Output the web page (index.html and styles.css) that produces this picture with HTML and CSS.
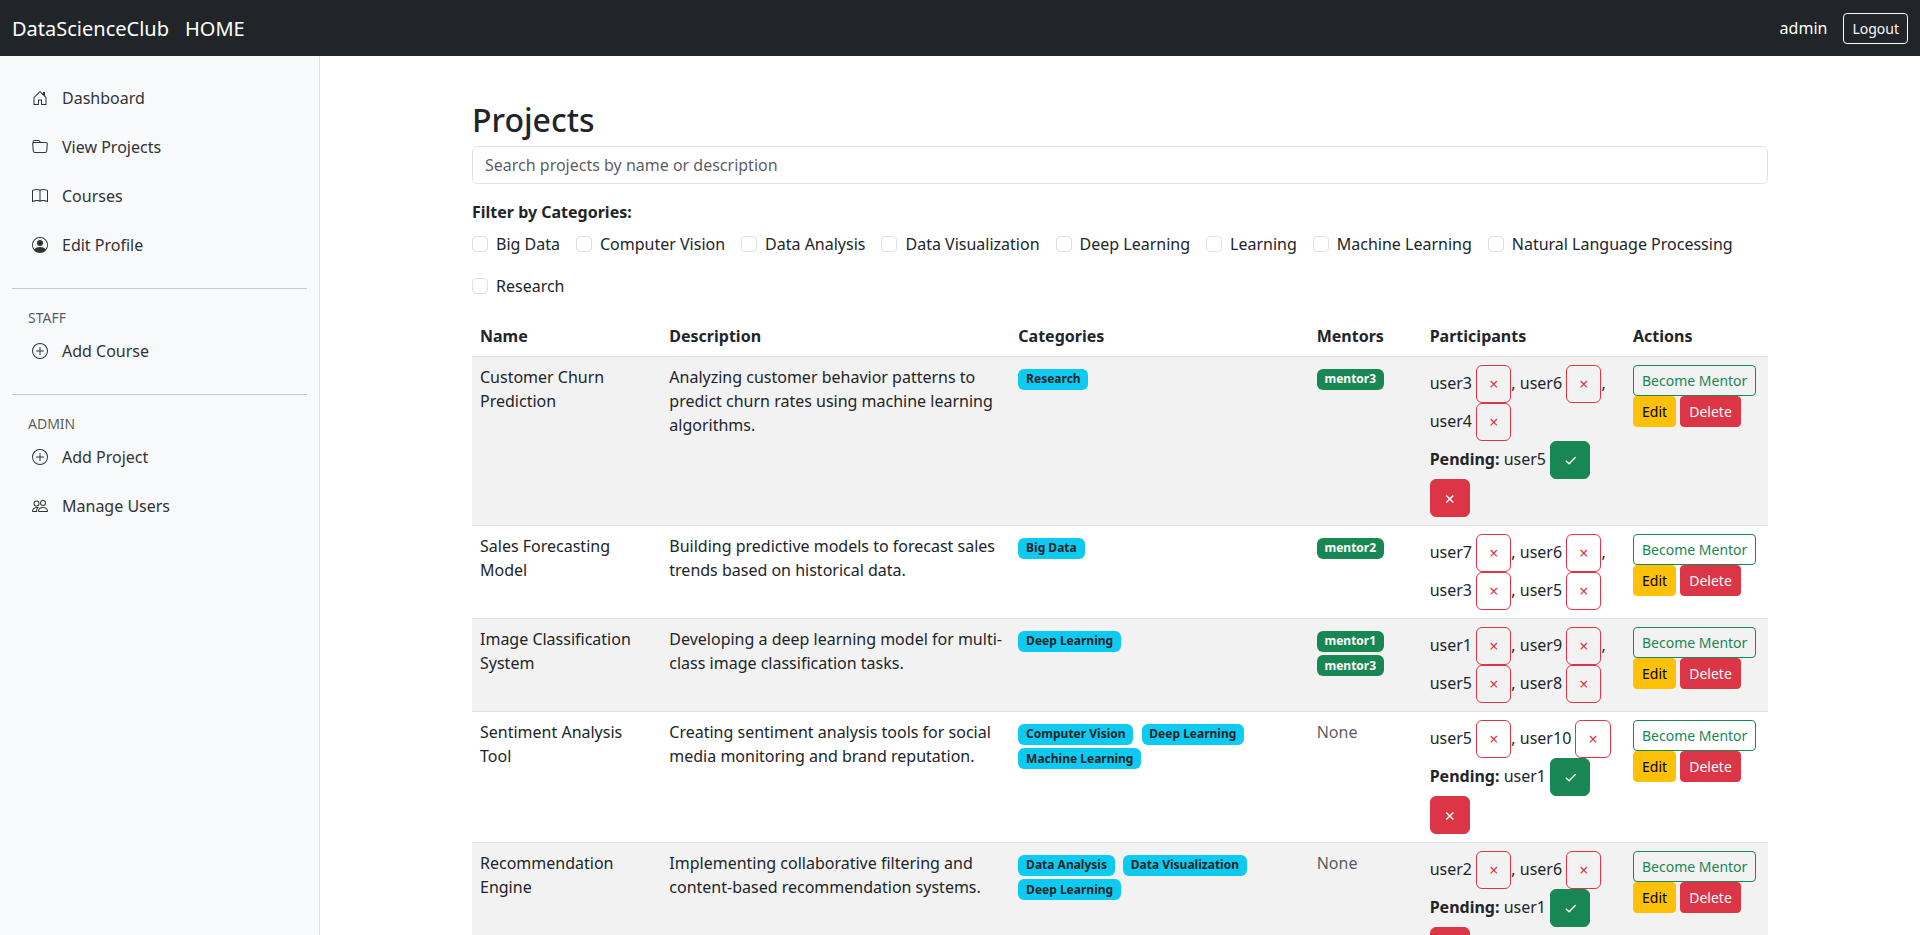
FILE: index.html
```html
<!DOCTYPE html>
<html lang="en">
<head>
<meta charset="utf-8">
<title>Projects</title>
<link rel="stylesheet" href="styles.css">
</head>
<body>
<svg class="defs" width="0" height="0">
  <symbol id="i-check" viewBox="0 0 14 24"><path d="M2.8 12.8 6.1 15.8 12.6 9.3" fill="none" stroke="currentColor" stroke-width="1.4"/></symbol>
  <symbol id="i-x" viewBox="0 0 14 24"><path d="M3.3 9.5l7 7M10.3 9.5l-7 7" fill="none" stroke="currentColor" stroke-width="1.5"/></symbol>
</svg>
<nav class="navbar">
  <div class="brands"><a class="brand">DataScienceClub</a><a class="brand">HOME</a></div>
  <div class="account"><span class="account-name">admin</span><button class="btn btn-sm outline-light">Logout</button></div>
</nav>
<div class="layout">
  <aside class="sidebar">
    <a class="side-link"><svg class="icon" viewBox="0 0 16 16"><path d="M8.354 1.146a.5.5 0 0 0-.708 0l-6 6A.5.5 0 0 0 1.5 7.5v7a.5.5 0 0 0 .5.5h4.5a.5.5 0 0 0 .5-.5v-4h2v4a.5.5 0 0 0 .5.5H14a.5.5 0 0 0 .5-.5v-7a.5.5 0 0 0-.146-.354L13 5.793V2.5a.5.5 0 0 0-.5-.5h-1a.5.5 0 0 0-.5.5v1.293zM2.5 14V7.707l5.5-5.5 5.5 5.5V14H10v-4a.5.5 0 0 0-.5-.5h-3a.5.5 0 0 0-.5.5v4z"/></svg>Dashboard</a>
    <a class="side-link"><svg class="icon" viewBox="0 0 16 16"><path d="M.54 3.87.5 3a2 2 0 0 1 2-2h3.672a2 2 0 0 1 1.414.586l.828.828A2 2 0 0 0 9.828 3h3.982a2 2 0 0 1 1.992 2.181l-.637 7A2 2 0 0 1 13.174 14H2.826a2 2 0 0 1-1.991-1.819l-.637-7a2 2 0 0 1 .342-1.31zM2.19 4a1 1 0 0 0-.996 1.09l.637 7a1 1 0 0 0 .995.91h10.348a1 1 0 0 0 .995-.91l.637-7A1 1 0 0 0 13.81 4zm4.69-1.707A1 1 0 0 0 6.172 2H2.5a1 1 0 0 0-1 .981l.006.139q.323-.119.684-.12h5.396z"/></svg>View Projects</a>
    <a class="side-link"><svg class="icon" viewBox="0 0 16 16"><path d="M1 2.828c.885-.37 2.154-.769 3.388-.893 1.33-.134 2.458.063 3.112.752v9.746c-.935-.53-2.12-.603-3.213-.493-1.18.12-2.37.461-3.287.811zm7.5-.141c.654-.689 1.782-.886 3.112-.752 1.234.124 2.503.523 3.388.893v9.923c-.918-.35-2.107-.692-3.287-.81-1.094-.111-2.278-.039-3.213.492zM8 1.783C7.015.936 5.587.81 4.287.94c-1.514.153-3.042.672-3.994 1.105A.5.5 0 0 0 0 2.5v11a.5.5 0 0 0 .707.455c.882-.4 2.303-.881 3.68-1.02 1.409-.142 2.59.087 3.223.877a.5.5 0 0 0 .78 0c.633-.79 1.814-1.019 3.222-.877 1.378.139 2.8.62 3.681 1.02A.5.5 0 0 0 16 13.5v-11a.5.5 0 0 0-.293-.455c-.952-.433-2.48-.952-3.994-1.105C10.413.809 8.985.936 8 1.783"/></svg>Courses</a>
    <a class="side-link"><svg class="icon" viewBox="0 0 16 16"><path d="M11 6a3 3 0 1 1-6 0 3 3 0 0 1 6 0"/><path fill-rule="evenodd" d="M0 8a8 8 0 1 1 16 0A8 8 0 0 1 0 8m8-7a7 7 0 0 0-5.468 11.37C3.242 11.226 4.805 10 8 10s4.757 1.225 5.468 2.37A7 7 0 0 0 8 1"/></svg>Edit Profile</a>
    <hr class="rule">
    <div class="side-label">STAFF</div>
    <a class="side-link"><svg class="icon" viewBox="0 0 16 16"><path d="M8 15A7 7 0 1 1 8 1a7 7 0 0 1 0 14m0 1A8 8 0 1 0 8 0a8 8 0 0 0 0 16"/><path d="M8 4a.5.5 0 0 1 .5.5v3h3a.5.5 0 0 1 0 1h-3v3a.5.5 0 0 1-1 0v-3h-3a.5.5 0 0 1 0-1h3v-3A.5.5 0 0 1 8 4"/></svg>Add Course</a>
    <hr class="rule">
    <div class="side-label">ADMIN</div>
    <a class="side-link"><svg class="icon" viewBox="0 0 16 16"><path d="M8 15A7 7 0 1 1 8 1a7 7 0 0 1 0 14m0 1A8 8 0 1 0 8 0a8 8 0 0 0 0 16"/><path d="M8 4a.5.5 0 0 1 .5.5v3h3a.5.5 0 0 1 0 1h-3v3a.5.5 0 0 1-1 0v-3h-3a.5.5 0 0 1 0-1h3v-3A.5.5 0 0 1 8 4"/></svg>Add Project</a>
    <a class="side-link"><svg class="icon" viewBox="0 0 16 16"><path d="M15 14s1 0 1-1-1-4-5-4-5 3-5 4 1 1 1 1zm-7.978-1L7 12.996c.001-.264.167-1.03.76-1.72C8.312 10.629 9.282 10 11 10c1.717 0 2.687.63 3.24 1.276.593.69.758 1.457.76 1.72l-.008.002-.014.002zM11 7a2 2 0 1 0 0-4 2 2 0 0 0 0 4m3-2a3 3 0 1 1-6 0 3 3 0 0 1 6 0M6.936 9.28a6 6 0 0 0-1.23-.247A7 7 0 0 0 5 9c-4 0-5 3-5 4q0 1 1 1h4.216A2.24 2.24 0 0 1 5 13c0-1.01.377-2.042 1.09-2.904.243-.294.526-.569.846-.816M4.92 10A5.5 5.5 0 0 0 4 13H1c0-.26.164-1.03.76-1.724.545-.636 1.492-1.256 3.16-1.275ZM1.5 5.5a3 3 0 1 1 6 0 3 3 0 0 1-6 0m3-2a2 2 0 1 0 0 4 2 2 0 0 0 0-4"/></svg>Manage Users</a>
  </aside>
  <main class="main">
    <div class="container">
      <h2 class="title">Projects</h2>
      <input class="search" type="text" placeholder="Search projects by name or description">
      <div class="filter-title">Filter by Categories:</div>
      <div class="filters">
        <label class="check"><input type="checkbox" class="box">Big Data</label>
        <label class="check"><input type="checkbox" class="box">Computer Vision</label>
        <label class="check"><input type="checkbox" class="box">Data Analysis</label>
        <label class="check"><input type="checkbox" class="box">Data Visualization</label>
        <label class="check"><input type="checkbox" class="box">Deep Learning</label>
        <label class="check"><input type="checkbox" class="box">Learning</label>
        <label class="check"><input type="checkbox" class="box">Machine Learning</label>
        <label class="check"><input type="checkbox" class="box">Natural Language Processing</label>
        <label class="check"><input type="checkbox" class="box">Research</label>
      </div>
      <table class="table">
        <colgroup><col class="c-name"><col class="c-desc"><col class="c-cat"><col class="c-ment"><col class="c-part"><col class="c-act"></colgroup>
        <thead><tr><th>Name</th><th>Description</th><th>Categories</th><th>Mentors</th><th>Participants</th><th>Actions</th></tr></thead>
        <tbody>
          <tr>
            <td>Customer Churn Prediction</td>
            <td>Analyzing customer behavior patterns to predict churn rates using machine learning algorithms.</td>
            <td><span class="badge info">Research</span></td>
            <td><span class="badge success">mentor3</span></td>
            <td>user3 <button class="btn outline-danger">×</button>, user6 <button class="btn outline-danger">×</button>, user4 <button class="btn outline-danger">×</button><br><b>Pending:</b> user5 <button class="btn btn-icon fill-success"><svg class="mark"><use href="#i-check"/></svg></button> <button class="btn btn-icon fill-danger"><svg class="mark"><use href="#i-x"/></svg></button></td>
            <td><button class="btn btn-sm outline-success">Become Mentor</button> <button class="btn btn-sm fill-warning">Edit</button> <button class="btn btn-sm fill-danger">Delete</button></td>
          </tr>
          <tr>
            <td>Sales Forecasting Model</td>
            <td>Building predictive models to forecast sales trends based on historical data.</td>
            <td><span class="badge info">Big Data</span></td>
            <td><span class="badge success">mentor2</span></td>
            <td>user7 <button class="btn outline-danger">×</button>, user6 <button class="btn outline-danger">×</button>, user3 <button class="btn outline-danger">×</button>, user5 <button class="btn outline-danger">×</button></td>
            <td><button class="btn btn-sm outline-success">Become Mentor</button> <button class="btn btn-sm fill-warning">Edit</button> <button class="btn btn-sm fill-danger">Delete</button></td>
          </tr>
          <tr>
            <td>Image Classification System</td>
            <td>Developing a deep learning model for multi-class image classification tasks.</td>
            <td><span class="badge info">Deep Learning</span></td>
            <td><span class="badge success">mentor1</span> <span class="badge success">mentor3</span></td>
            <td>user1 <button class="btn outline-danger">×</button>, user9 <button class="btn outline-danger">×</button>, user5 <button class="btn outline-danger">×</button>, user8 <button class="btn outline-danger">×</button></td>
            <td><button class="btn btn-sm outline-success">Become Mentor</button> <button class="btn btn-sm fill-warning">Edit</button> <button class="btn btn-sm fill-danger">Delete</button></td>
          </tr>
          <tr>
            <td>Sentiment Analysis Tool</td>
            <td>Creating sentiment analysis tools for social media monitoring and brand reputation.</td>
            <td><span class="badge info">Computer Vision</span> <span class="badge info">Deep Learning</span> <span class="badge info">Machine Learning</span></td>
            <td><span class="muted">None</span></td>
            <td>user5 <button class="btn outline-danger">×</button>, user10 <button class="btn outline-danger">×</button><br><b>Pending:</b> user1 <button class="btn btn-icon fill-success"><svg class="mark"><use href="#i-check"/></svg></button> <button class="btn btn-icon fill-danger"><svg class="mark"><use href="#i-x"/></svg></button></td>
            <td><button class="btn btn-sm outline-success">Become Mentor</button> <button class="btn btn-sm fill-warning">Edit</button> <button class="btn btn-sm fill-danger">Delete</button></td>
          </tr>
          <tr>
            <td>Recommendation Engine</td>
            <td>Implementing collaborative filtering and content-based recommendation systems.</td>
            <td><span class="badge info">Data Analysis</span> <span class="badge info">Data Visualization</span> <span class="badge info">Deep Learning</span></td>
            <td><span class="muted">None</span></td>
            <td>user2 <button class="btn outline-danger">×</button>, user6 <button class="btn outline-danger">×</button><br><b>Pending:</b> user1 <button class="btn btn-icon fill-success"><svg class="mark"><use href="#i-check"/></svg></button> <button class="btn btn-icon fill-danger"><svg class="mark"><use href="#i-x"/></svg></button></td>
            <td><button class="btn btn-sm outline-success">Become Mentor</button> <button class="btn btn-sm fill-warning">Edit</button> <button class="btn btn-sm fill-danger">Delete</button></td>
          </tr>
        </tbody>
      </table>
    </div>
  </main>
</div>
</body>
</html>
```
FILE: styles.css
```css
*, *::before, *::after { box-sizing: border-box; }
html, body { height: 100%; }
body {
  margin: 0;
  display: flex;
  flex-direction: column;
  overflow: hidden;
  font: 400 16px/1.5 "Noto Sans", "Liberation Sans", sans-serif;
  color: #212529;
  background: #fff;
}
.defs { display: none; }
.navbar {
  flex: none;
  height: 56px;
  padding: 0 12px;
  display: flex;
  align-items: center;
  justify-content: space-between;
  background: #212529;
  color: #fff;
}
.brands, .account { display: flex; align-items: center; gap: 16px; }
.brand { padding-top: 2px; font-size: 20px; line-height: 30px; }
.layout { flex: 1; min-height: 0; display: flex; }
.sidebar {
  flex: none;
  width: 320px;
  padding: 17px 12px;
  background: #f8f9fa;
  border-right: 1px solid #dee2e6;
}
.side-link {
  display: flex;
  align-items: center;
  gap: 14px;
  height: 49px;
  padding: 0 20px;
  color: #333;
}
.icon { width: 16px; height: 16px; fill: currentColor; flex: none; }
.rule { height: 1px; margin: 19px 0 15px; border: 0; background: #c8c9ca; }
.side-label { padding: 3px 16px 0; height: 22px; font-size: 14px; line-height: 21px; color: rgba(33, 37, 41, .75); }
.main { flex: 1; min-width: 0; overflow: hidden; }
.container { width: 1320px; margin: 0 auto; padding: 45px 12px 0; }
.title { margin: 0 0 7px; font-size: 32px; font-weight: 500; line-height: 38.4px; }
.search {
  display: block;
  width: 100%;
  height: 38px;
  padding: 6px 12px;
  border: 1px solid #dee2e6;
  border-radius: 6px;
  font: inherit;
  background: #fff;
}
.search::placeholder { color: rgba(33, 37, 41, .75); opacity: 1; }
.filter-title { margin-top: 16px; font-weight: 700; }
.filters { display: flex; flex-wrap: wrap; gap: 18px 16px; margin: 8px 0 18px; }
.check { display: flex; align-items: center; gap: 8px; height: 24px; }
.box {
  appearance: none;
  width: 16px;
  height: 16px;
  margin: 0;
  border: 1px solid #dee2e6;
  border-radius: 4px;
  background: #fff;
}
.table { width: 100%; table-layout: fixed; border-collapse: collapse; }
.c-name { width: 189.3px; }
.c-desc { width: 349px; }
.c-cat { width: 298.4px; }
.c-ment { width: 113px; }
.c-part { width: 203.3px; }
.c-act { width: 143px; }
.table th, .table td { padding: 8px; text-align: left; vertical-align: top; border-bottom: 1px solid #dee2e6; }
.table tbody tr:nth-child(odd) { background: #f2f2f2; }
.btn {
  display: inline-block;
  padding: 6px 12px;
  border: 1px solid transparent;
  border-radius: 6px;
  font: inherit;
  background: transparent;
  vertical-align: -1px;
}
.btn-sm { padding: 4px 8px; border-radius: 4px; font-size: 14px; vertical-align: baseline; }
.btn-icon { vertical-align: -7px; }
.mark { display: block; width: 14px; height: 24px; }
.outline-light { color: #f8f9fa; border-color: #f8f9fa; }
.outline-danger { color: #dc3545; border-color: #dc3545; }
.outline-success { color: #198754; border-color: #198754; }
.fill-success { color: #fff; background: #198754; border-color: #198754; }
.fill-danger { color: #fff; background: #dc3545; border-color: #dc3545; }
.fill-warning { color: #000; background: #ffc107; border-color: #ffc107; }
.badge {
  display: inline-block;
  padding: 4.2px 7.8px;
  margin-right: 4px;
  border-radius: 6px;
  font-size: 12px;
  font-weight: 700;
  line-height: 1;
  white-space: nowrap;
  vertical-align: baseline;
}
.info { background: #0dcaf0; color: #212529; }
.success { background: #198754; color: #fff; }
.muted { color: rgba(33, 37, 41, .75); }
```
